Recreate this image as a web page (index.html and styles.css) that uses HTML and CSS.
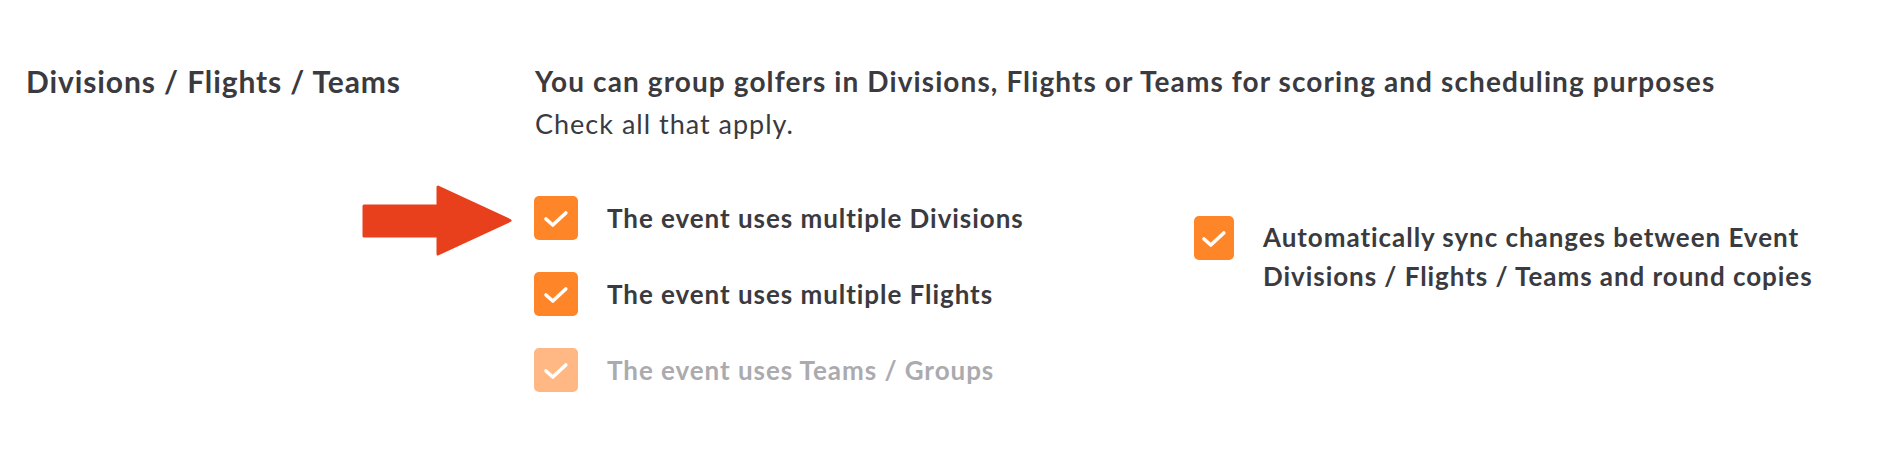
FILE: index.html
```html
<!DOCTYPE html>
<html>
<head>
    <title>Divisions / Flights / Teams</title>
    <link rel="stylesheet" href="styles.css">
</head>
<body>
<div class="setting">
    <div class="setting-label">Divisions / Flights / Teams</div>
    <div class="setting-body">
        <p class="lead">You can group golfers in Divisions, Flights or Teams for scoring and scheduling purposes</p>
        <p class="hint">Check all that apply.</p>

        <div class="options">
            <div class="option-list">
                <label class="option">
                    <svg class="pointer" width="150" height="71" viewBox="0 0 150 71">
                        <path d="M2 21 H76 V2 L148 35.5 L76 69 V51 H2 Z" fill="#e8401c" stroke="#e8401c" stroke-width="3" stroke-linejoin="round"/>
                    </svg>
                    <span class="box checked">
                        <svg viewBox="0 0 44 44"><path d="M12 23 L18.8 29 L31.8 17"/></svg>
                    </span>
                    <span class="text">The event uses multiple Divisions</span>
                </label>
                <label class="option">
                    <span class="box checked">
                        <svg viewBox="0 0 44 44"><path d="M12 23 L18.8 29 L31.8 17"/></svg>
                    </span>
                    <span class="text">The event uses multiple Flights</span>
                </label>
                <label class="option disabled">
                    <span class="box checked">
                        <svg viewBox="0 0 44 44"><path d="M12 23 L18.8 29 L31.8 17"/></svg>
                    </span>
                    <span class="text">The event uses Teams / Groups</span>
                </label>
            </div>

            <label class="option option-wide">
                <span class="box checked narrow">
                    <svg viewBox="0 0 40 44"><path d="M10 23 L16.8 29 L29.8 17"/></svg>
                </span>
                <span class="text">Automatically sync changes between Event<br>Divisions / Flights / Teams and round copies</span>
            </label>
        </div>
    </div>
</div>
</body>
</html>
```

FILE: styles.css
```css
body {
    margin: 0;
    background-color: #fff;
    font-family: Lato, "Noto Sans", sans-serif;
    color: #3a3a3f;
}
.setting {
    display: flex;
    padding: 61px 0 0 26px;
}
.setting-label {
    width: 509px;
    flex-shrink: 0;
    font-size: 30px;
    font-weight: bold;
    letter-spacing: 0.9px;
    line-height: 40px;
}
.setting-body {
    flex: 1;
}
.lead {
    margin: 0;
    font-size: 28px;
    font-weight: bold;
    letter-spacing: 1.1px;
    line-height: 40px;
}
.hint {
    margin: 3px 0 0 0;
    font-size: 27px;
    letter-spacing: 1px;
    line-height: 40px;
}
.options {
    display: grid;
    grid-template-columns: 660px auto;
    margin-top: 52px;
    margin-left: -1px;
}
.option-list {
    display: flex;
    flex-direction: column;
    gap: 32px;
}
.option {
    position: relative;
    display: flex;
    align-items: center;
    gap: 29px;
    font-size: 26px;
    font-weight: bold;
    letter-spacing: 0.95px;
    line-height: 39px;
}
.option-wide {
    align-items: flex-start;
    margin-top: 20px;
}
.option-wide .text {
    padding-top: 2px;
}
.pointer {
    position: absolute;
    left: -172px;
    top: -11px;
}
.box {
    width: 44px;
    height: 44px;
    flex-shrink: 0;
    border-radius: 5px;
    background-color: #ff8628;
}
.box.narrow {
    width: 40px;
}
.box svg {
    display: block;
    width: 100%;
    height: 100%;
}
.box path {
    fill: none;
    stroke: #fff;
    stroke-width: 3.6;
    stroke-linecap: round;
    stroke-linejoin: round;
}
.disabled .box {
    background-color: #ffb883;
}
.disabled .text {
    color: #ababaf;
}
```
